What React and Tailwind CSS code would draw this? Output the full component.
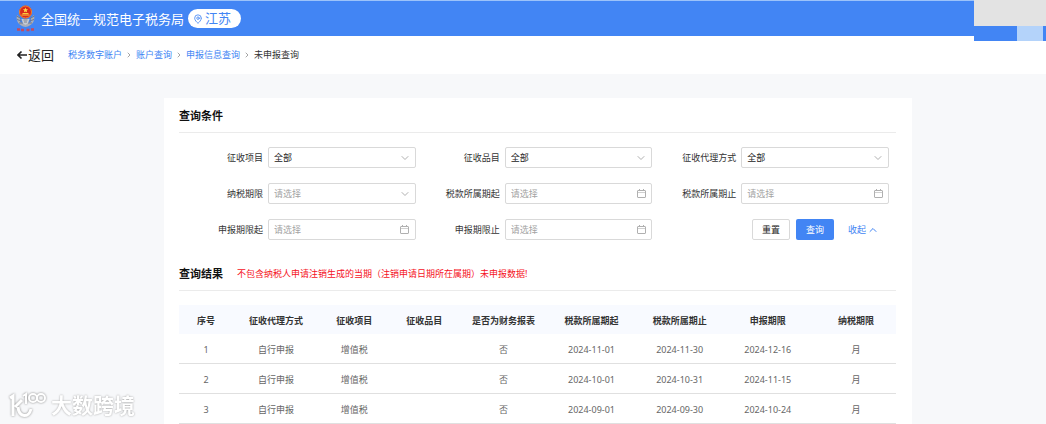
import { useState } from 'react';
import { ChevronDown, ChevronRight, ChevronUp, MapPin } from 'lucide-react';

const crumbs = ['税务数字账户', '账户查询', '申报信息查询'];

const fields = [
  { id: 'item', label: '征收项目', type: 'select', value: '全部' },
  { id: 'subItem', label: '征收品目', type: 'select', value: '全部' },
  { id: 'agency', label: '征收代理方式', type: 'select', value: '全部' },
  { id: 'period', label: '纳税期限', type: 'select', value: '' },
  { id: 'taxStart', label: '税款所属期起', type: 'date' },
  { id: 'taxEnd', label: '税款所属期止', type: 'date' },
  { id: 'dueStart', label: '申报期限起', type: 'date' },
  { id: 'dueEnd', label: '申报期限止', type: 'date' },
];

const columns = [
  { title: '序号', width: 'w-[54px]' },
  { title: '征收代理方式', width: 'w-[86px]' },
  { title: '征收项目', width: 'w-[70px]' },
  { title: '征收品目', width: 'w-[70px]' },
  { title: '是否为财务报表', width: 'w-[88px]' },
  { title: '税款所属期起', width: 'w-[88px]' },
  { title: '税款所属期止', width: 'w-[88px]' },
  { title: '申报期限', width: 'w-[88px]' },
  { title: '纳税期限', width: 'w-[88px]' },
];

const rows = [
  ['1', '自行申报', '增值税', '', '否', '2024-11-01', '2024-11-30', '2024-12-16', '月'],
  ['2', '自行申报', '增值税', '', '否', '2024-10-01', '2024-10-31', '2024-11-15', '月'],
  ['3', '自行申报', '增值税', '', '否', '2024-09-01', '2024-09-30', '2024-10-24', '月'],
];

const Emblem = () => (
  <svg viewBox="0 0 42 54" className="h-[27px] w-[21px]" aria-hidden="true">
    <path d="M4 20C1 32 8 42 21 44C34 42 41 32 38 20L32 26V34L21 39L10 34V26Z" fill="#a9aeb9" />
    <path d="M3 22l9 5M4 29l9 3M8 36l8 0M39 22l-9 5M38 29l-9 3M34 36l-8 0" stroke="#70798c" strokeWidth="2" />
    <path d="M13 28H29L26 37L21 40L16 37Z" fill="#c9cbd0" />
    <path d="M17 30h8M18 34h6" stroke="#7b8292" strokeWidth="2" />
    <circle cx="21" cy="14" r="13" fill="#d92a1c" />
    <circle cx="21" cy="14" r="12" fill="none" stroke="#e8893a" strokeWidth="2" />
    <path d="M21 5l1.5 3.4 3.6.3-2.7 2.4.8 3.6-3.2-1.9-3.2 1.9.8-3.6-2.7-2.4 3.6-.3Z" fill="#ffd84a" />
    <path d="M13 20h16M15 17h12" stroke="#ffc93e" strokeWidth="2" />
    <path d="M4 49h6M12 50h6M23 50h6M32 49h6" stroke="#c4495f" strokeWidth="5" />
  </svg>
);

const CalendarIcon = () => (
  <svg viewBox="0 0 9 9" className="h-[9px] w-[9px]" fill="none" stroke="currentColor">
    <rect x="0.5" y="1.5" width="8" height="7" rx="0.5" />
    <path d="M1 3.5h7" strokeOpacity="0.6" />
    <path d="M2.5 0v2M6.5 0v2" />
  </svg>
);

const Header = () => (
  <header className="relative flex h-9 items-center border-t border-[#9cc3fa] bg-[#4285f4] pl-[15px] text-white">
    <Emblem />
    <span className="ml-[5px] text-[13px] leading-5">全国统一规范电子税务局</span>
    <button className="ml-1 flex h-[19px] items-center gap-[2px] rounded-full bg-white pr-[10px] pl-[5px] text-[13px] leading-[19px] text-[#4285f4]">
      <MapPin size={10} strokeWidth={2} />
      江苏
    </button>
    <div className="absolute -top-px right-0 flex h-[41px] w-[72px] flex-col bg-[#4285f4]">
      <div className="h-[26px] bg-[#e3e3e3]" />
      <div className="mr-[3px] ml-auto w-[26px] flex-1 bg-[#b4d3fa]" />
    </div>
  </header>
);

const Breadcrumb = () => (
  <nav className="flex h-[38px] items-center bg-white pl-[17px] text-[9px] leading-4">
    <button className="flex items-center gap-px text-[13px] leading-5 text-[#222]">
      <svg viewBox="0 0 10 10" className="h-[10px] w-[10px]" fill="none" stroke="currentColor" strokeWidth="1.6">
        <path d="M1 5h9M4.5 1.5L1 5l3.5 3.5" />
      </svg>
      返回
    </button>
    <div className="ml-[14px] flex items-center gap-[3px]">
      {crumbs.map((crumb) => (
        <div key={crumb} className="flex items-center gap-[3px]">
          <a href="#" className="text-[#4285f4]">{crumb}</a>
          <ChevronRight size={8} className="text-[#777]" />
        </div>
      ))}
      <span className="text-[#333]">未申报查询</span>
    </div>
  </nav>
);

const Field = ({ field }) => {
  const [value, setValue] = useState(field.value || '');
  const box = 'block h-[21px] w-full appearance-none rounded-[2px] border border-[#d9d9d9] bg-white pr-5 pl-[5px] text-[9px] leading-[19px] outline-none placeholder:text-[#a3a3a3]';

  return (
    <div className="flex items-center gap-[5px]">
      <label htmlFor={field.id} className="w-[84px] shrink-0 text-right leading-4 text-[#333]">
        {field.label}
      </label>
      <div className="relative flex-1">
        {field.type === 'select' ? (
          <select
            id={field.id}
            value={value}
            onChange={(e) => setValue(e.target.value)}
            className={`${box} ${value ? 'text-[#222]' : 'text-[#a3a3a3]'}`}
          >
            <option value="">请选择</option>
            <option value="全部">全部</option>
          </select>
        ) : (
          <input
            id={field.id}
            value={value}
            placeholder="请选择"
            onChange={(e) => setValue(e.target.value)}
            className={box}
          />
        )}
        <span className="pointer-events-none absolute inset-y-0 right-[5px] flex w-3 items-center justify-center text-[#b0b0b0]">
          {field.type === 'select' ? <ChevronDown size={12} /> : <CalendarIcon />}
        </span>
      </div>
    </div>
  );
};

const QueryForm = () => (
  <section>
    <h2 className="border-b border-[#ebebeb] pt-[9px] pb-2 text-[11px] leading-[17px] font-bold text-[#111]">查询条件</h2>
    <form className="grid grid-cols-3 gap-y-[15px] pt-[14px] pr-[7px]" onSubmit={(e) => e.preventDefault()}>
      {fields.map((field) => (
        <Field key={field.id} field={field} />
      ))}
      <div className="flex items-center justify-end gap-[6px] pr-[10px]">
        <button type="reset" className="h-[21px] w-[38px] rounded-[2px] border border-[#d9d9d9] bg-white text-[#222]">
          重置
        </button>
        <button type="submit" className="h-[21px] w-[38px] rounded-[2px] bg-[#4285f4] text-white">
          查询
        </button>
        <button type="button" className="ml-2 flex items-center gap-px text-[#4285f4]">
          收起
          <ChevronUp size={12} />
        </button>
      </div>
    </form>
  </section>
);

const ResultTable = () => (
  <section>
    <div className="flex items-center gap-[14px] border-b border-[#ebebeb] pt-[25px] pb-2">
      <h2 className="text-[11px] leading-[17px] font-bold text-[#111]">查询结果</h2>
      <p className="leading-[17px] text-[#f5121d]">不包含纳税人申请注销生成的当期（注销申请日期所在属期）未申报数据!</p>
    </div>
    <div className="mt-[14px] overflow-hidden">
      <table className="w-[calc(100%+4px)] table-fixed border-separate border-spacing-0 text-center">
        <thead>
          <tr className="h-[29px] text-[#333]">
            {columns.map((col) => (
              <th key={col.title} className={`${col.width} bg-[#f8faff] pt-[2px] font-bold whitespace-nowrap`}>{col.title}</th>
            ))}
          </tr>
        </thead>
        <tbody>
          {rows.map((row) => (
            <tr key={row[0]} className="h-[30px] text-[#666]">
              {row.map((cell, i) => (
                <td key={i} className="border-b border-[#e0e0e0] pt-[2px]">{cell}</td>
              ))}
            </tr>
          ))}
        </tbody>
      </table>
    </div>
  </section>
);

const Watermark = () => (
  <div className="pointer-events-none fixed bottom-[5px] left-[9px] flex items-center gap-1 text-white">
    <svg viewBox="0 0 38 28" className="h-7 w-[38px] drop-shadow-[0_0_1px_#888]" fill="none" stroke="currentColor" strokeWidth="3">
      <path d="M1 7l3-2v20M13 9L6 16M9 16c1 11 11 11 13 2" />
      <path d="M14 5l3-2v10" strokeWidth="2" />
      <circle cx="24" cy="7" r="4" strokeWidth="2" />
      <circle cx="32" cy="7" r="4" strokeWidth="2" />
    </svg>
    <span className="text-[21px] leading-7 font-bold [text-shadow:0_0_2px_#999]">大数跨境</span>
  </div>
);

const App = () => {
  return (
    <div className="flex min-h-screen flex-col bg-[#f7f8fa] font-['Noto_Sans','Noto_Sans_CJK_SC',sans-serif] text-[9px] leading-4">
      <Header />
      <Breadcrumb />
      <main className="mt-6 mr-[134px] ml-[164px] flex-1 bg-white pr-4 pl-[15px]">
        <QueryForm />
        <ResultTable />
      </main>
      <Watermark />
    </div>
  );
};

export default App;
